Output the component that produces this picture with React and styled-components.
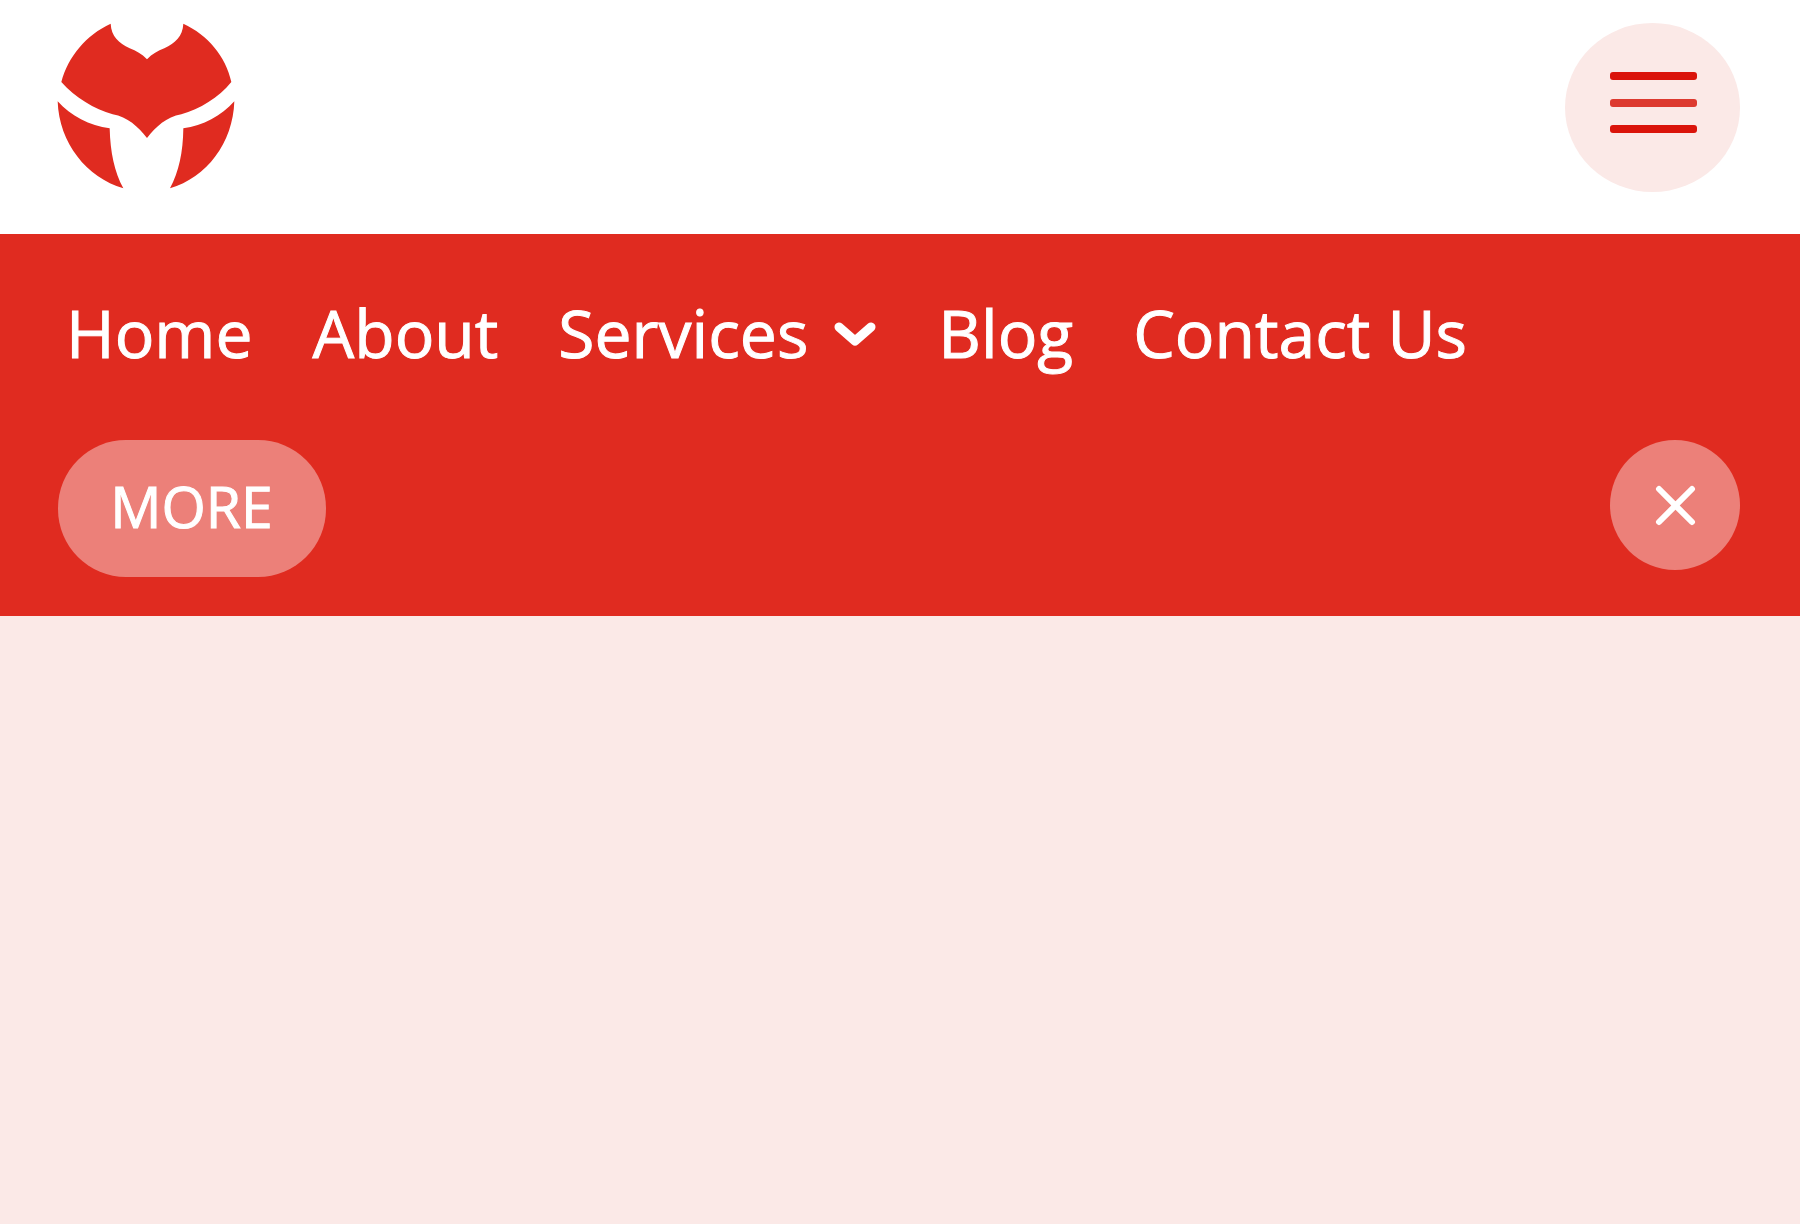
import React from "react"
import styled, { createGlobalStyle } from "styled-components"


const GlobalStyle = createGlobalStyle`
  * {
    box-sizing: border-box;
  }

  body {
    margin: 0;
    background: #fbe9e7;
    font-family: "Open Sans", "Noto Sans", sans-serif;
  }
`

const StyledHeader = styled.header`
  display: flex;
  align-items: flex-start;
  justify-content: space-between;
  padding: 23px 60px 42px 57px;

  background: #ffffff;
`

const StyledLogo = styled.a`
  display: block;

  svg {
    display: block;
  }
`

const StyledMenuButton = styled.button`
  display: flex;
  align-items: center;
  justify-content: center;
  width: 175px;
  height: 169px;
  padding: 0 0 10px;

  background: #fbe9e7;
  border: none;
  border-radius: 50%;
  cursor: pointer;
`

const StyledPanel = styled.div`
  padding: 53px 60px 39px 58px;

  background: #e02b20;
`

const StyledNav = styled.nav`
  margin-bottom: 63px;
  padding-left: 8px;
`

const StyledList = styled.ul`
  display: flex;
  flex-wrap: wrap;
  gap: 0 60px;
  margin: 0;
  padding: 0;

  list-style: none;
`

const StyledLink = styled.a`
  display: flex;
  align-items: center;
  gap: 26px;

  color: #ffffff;
  font-size: 66px;
  font-weight: 500;
  line-height: 90px;
  text-decoration: none;
  white-space: nowrap;
  -webkit-text-stroke: 1px #ffffff;
`

const StyledActions = styled.div`
  display: flex;
  align-items: flex-start;
  justify-content: space-between;
`

const StyledPill = styled.button`
  min-width: 268px;
  height: 137px;
  padding: 0 49px 6px 48px;

  background: #ec8079;
  border: none;
  border-radius: 68px;
  color: #ffffff;
  font-family: inherit;
  font-size: 57px;
  font-weight: 500;
  -webkit-text-stroke: 1px #ffffff;
  cursor: pointer;
`

const StyledClose = styled.button`
  display: flex;
  align-items: center;
  justify-content: center;
  width: 130px;
  height: 130px;
  padding: 0;

  background: #ec8079;
  border: none;
  border-radius: 50%;
  cursor: pointer;
`

const Logo = () => (
  <svg width="178" height="168" viewBox="50 39 534 504" fill="#e02b20" aria-hidden="true">
    <path d="M211 41C213 80 235 98 268 115C288 122 304 132 320 148C336 132 352 122 372 115C405 98 427 80 429 41C502 75 556 138 573 216C535 263 478 297 423 313C378 321 347 350 320 384C293 350 262 321 217 313C162 297 105 263 63 216C84 138 138 75 211 41Z" />
    <path d="M52 274C91 317 148 348 208 355C210 428 222 485 249 535C139 503 56 399 52 274Z" />
    <path d="M582 274C543 317 488 348 429 355C428 428 416 485 389 535C499 503 578 399 582 274Z" />
  </svg>
)

const MenuIcon = () => (
  <svg width="88" height="62" viewBox="0 0 88 62" aria-hidden="true">
    <rect x="1" y="0" width="87" height="8" rx="3" fill="#da140b" />
    <rect x="1" y="27" width="87" height="8" rx="3" fill="#dd3a30" />
    <rect x="1" y="53" width="87" height="8" rx="3" fill="#da140b" />
  </svg>
)

const ChevronIcon = () => (
  <svg width="44" height="32" viewBox="0 0 44 32" aria-hidden="true">
    <path d="M5 11L21 25L37 11" fill="none" stroke="#ffffff" strokeWidth="9" strokeLinecap="round" strokeLinejoin="round" />
  </svg>
)

const CloseIcon = () => (
  <svg width="42" height="42" viewBox="0 0 42 42" aria-hidden="true">
    <path d="M5 5L38 38M38 5L5 38" fill="none" stroke="#ffffff" strokeWidth="6" strokeLinecap="round" />
  </svg>
)

const links = [
  { title: "Home" },
  { title: "About" },
  { title: "Services", hasMenu: true },
  { title: "Blog" },
  { title: "Contact Us" },
]

const App = () => {

  return (
    <>
      <GlobalStyle />
      <StyledHeader>
        <StyledLogo href="#" aria-label="Homepage">
          <Logo />
        </StyledLogo>
        <StyledMenuButton type="button" aria-label="Menu">
          <MenuIcon />
        </StyledMenuButton>
      </StyledHeader>
      <StyledPanel>
        <StyledNav>
          <StyledList>
            {links.map(link => (
              <li key={link.title}>
                <StyledLink href="#">
                  {link.title}
                  {link.hasMenu && <ChevronIcon />}
                </StyledLink>
              </li>
            ))}
          </StyledList>
        </StyledNav>
        <StyledActions>
          <StyledPill type="button">MORE</StyledPill>
          <StyledClose type="button" aria-label="Close">
            <CloseIcon />
          </StyledClose>
        </StyledActions>
      </StyledPanel>
    </>
  )
}

export default App
